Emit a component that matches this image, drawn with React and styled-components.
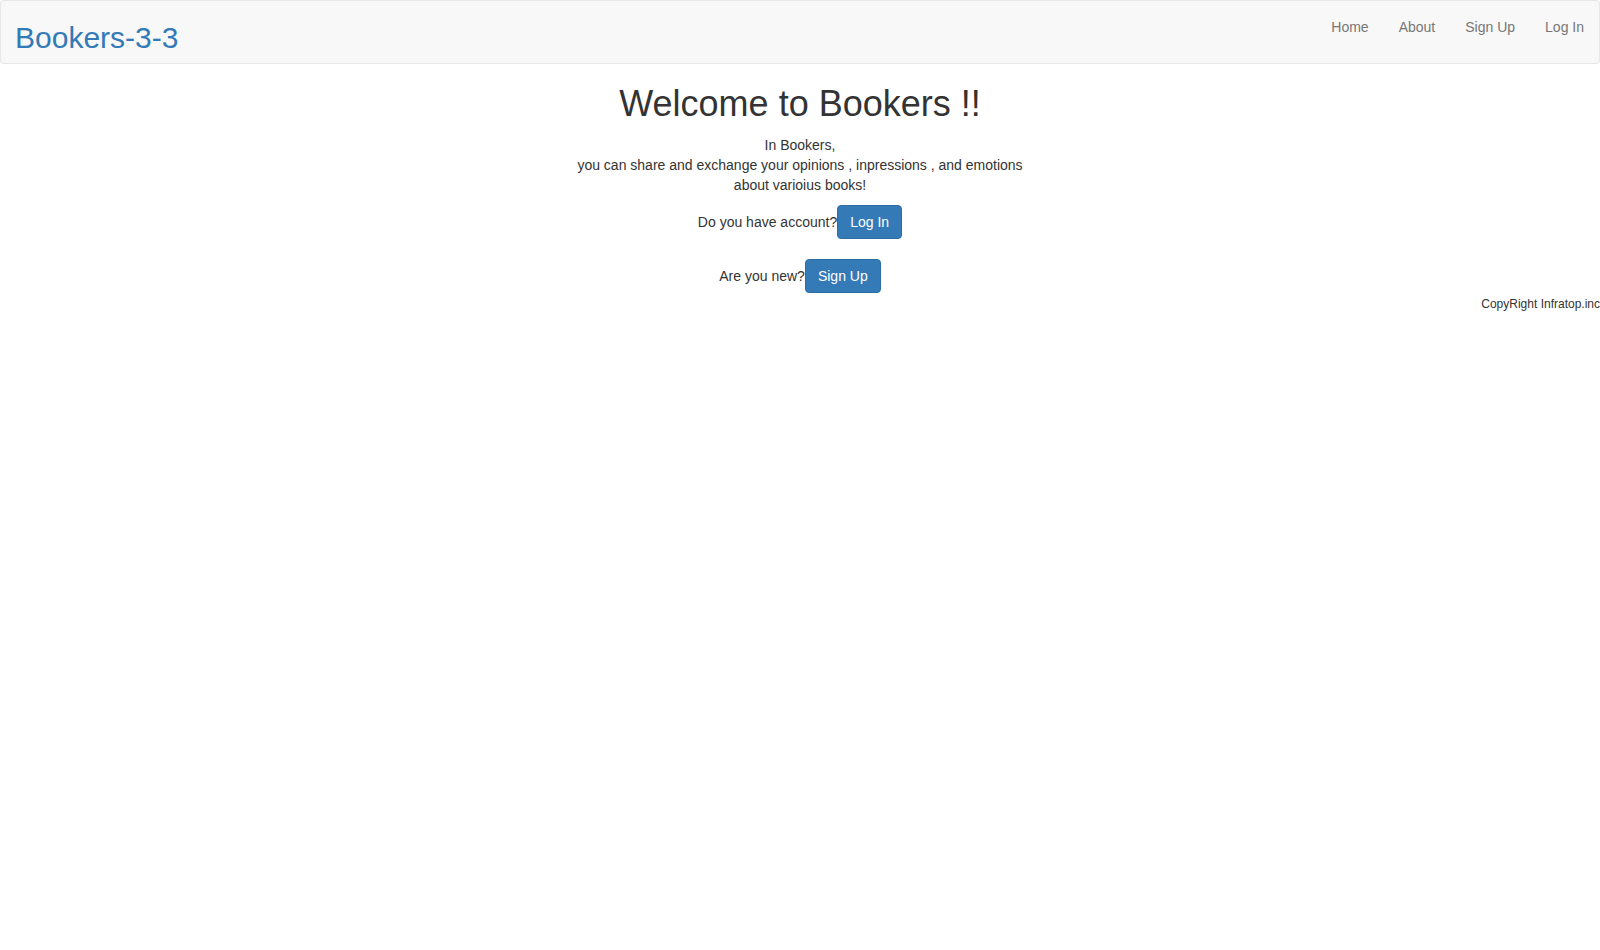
import React from "react";
import styled, { createGlobalStyle } from "styled-components";

const GlobalStyle = createGlobalStyle`
  * { box-sizing: border-box; }
  html, body { margin: 0; padding: 0; background: #fff; }
  body {
    font-family: "Liberation Sans", Arial, Helvetica, sans-serif;
    font-size: 14px;
    line-height: 1.42857143;
    color: #333;
  }
`;

const Navbar = styled.nav`
  display: flex;
  justify-content: space-between;
  align-items: flex-start;
  min-height: 64px;
  margin-bottom: 20px;
  background: #f8f8f8;
  border: 1px solid #e7e7e7;
  border-radius: 4px;
`;

const Brand = styled.a`
  display: block;
  padding: 22px 15px 10px 14px;
  font-size: 30px;
  line-height: 30px;
  color: #337ab7;
  text-decoration: none;
`;

const NavList = styled.ul`
  display: flex;
  list-style: none;
  margin: 0;
  padding: 0;
`;

const NavLink = styled.a`
  display: block;
  padding: 16px 15px 14px;
  line-height: 20px;
  font-size: 14px;
  color: #777;
  text-decoration: none;
`;

const Main = styled.main`
  text-align: center;
`;

const Title = styled.h1`
  margin: 20px 0 11px;
  font-size: 36px;
  font-weight: 500;
  line-height: 1.1;
`;

const Intro = styled.p`
  margin: 0 0 10px;
  line-height: 20px;
`;

const Row = styled.p`
  margin: 0 0 ${(p) => p.$gap}px;
  line-height: 20px;
`;

const Button = styled.a`
  display: inline-block;
  padding: 6px 12px;
  font-size: 14px;
  line-height: 1.42857143;
  color: #fff;
  background: #337ab7;
  border: 1px solid #2e6da4;
  border-radius: 4px;
  text-decoration: none;
  vertical-align: baseline;
  cursor: pointer;
`;

const Footer = styled.footer`
  text-align: right;
  line-height: 20px;
`;

const Small = styled.small`
  font-size: 12px;
`;

export default function App() {
  const links = ["Home", "About", "Sign Up", "Log In"];
  return (
    <>
      <GlobalStyle />
      <Navbar>
        <Brand href="#">Bookers-3-3</Brand>
        <NavList>
          {links.map((l) => (
            <li key={l}>
              <NavLink href="#">{l}</NavLink>
            </li>
          ))}
        </NavList>
      </Navbar>
      <Main>
        <Title>Welcome to Bookers !!</Title>
        <Intro>
          In Bookers,
          <br />
          you can share and exchange your opinions , inpressions , and emotions
          <br />
          about varioius books!
        </Intro>
        <Row $gap={20}>
          Do you have account?<Button href="#">Log In</Button>
        </Row>
        <Row $gap={0}>
          Are you new?<Button href="#">Sign Up</Button>
        </Row>
      </Main>
      <Footer>
        <Small>CopyRight Infratop.inc</Small>
      </Footer>
    </>
  );
}
